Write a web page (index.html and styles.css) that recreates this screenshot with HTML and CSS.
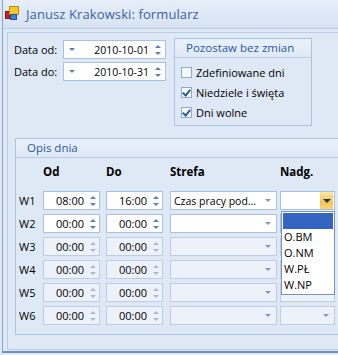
FILE: index.html
```html
<!DOCTYPE html>
<html lang="pl">
<head>
  <meta charset="UTF-8">
  <title>Janusz Krakowski: formularz</title>
  <link rel="stylesheet" href="styles.css">
</head>
<body>
  <div class="window">
    <div class="titlebar">
      <svg class="app-icon" width="15" height="15" viewBox="0 0 15 15">
        <rect x="0.5" y="5.5" width="4" height="7" fill="#c8231e" stroke="#8a1410"/>
        <rect x="4.5" y="0.5" width="9" height="8" fill="#f7c928" stroke="#b98a10"/>
        <rect x="5.5" y="8.5" width="6" height="5" fill="#3f7fd6" stroke="#23509a"/>
      </svg>
      <span class="title">Janusz Krakowski: formularz</span>
    </div>

    <div class="panel">
      <div class="top">
        <div class="dates">
          <div class="date-row">
            <span class="lbl">Data od:</span>
            <div class="edit date">
              <span class="tri down small"></span>
              <span class="val">2010-10-01</span>
              <span class="spin"><i class="tri up"></i><i class="tri down"></i></span>
            </div>
          </div>
          <div class="date-row">
            <span class="lbl">Data do:</span>
            <div class="edit date">
              <span class="tri down small"></span>
              <span class="val">2010-10-31</span>
              <span class="spin"><i class="tri up"></i><i class="tri down"></i></span>
            </div>
          </div>
        </div>

        <div class="group keep">
          <div class="group-head">Pozostaw bez zmian</div>
          <div class="checks">
            <div class="check"><span class="box"></span>Zdefiniowane dni</div>
            <div class="check"><span class="box on"></span>Niedziele i święta</div>
            <div class="check"><span class="box on"></span>Dni wolne</div>
          </div>
        </div>
      </div>

      <div class="group day">
        <div class="group-head">Opis dnia</div>
        <div class="grid">
          <span></span><b>Od</b><b>Do</b><b>Strefa</b><b>Nadg.</b>

          <span class="wk">W1</span>
          <div class="edit time"><span class="val">08:00</span><span class="spin"><i class="tri up"></i><i class="tri down"></i></span></div>
          <div class="edit time"><span class="val">16:00</span><span class="spin"><i class="tri up"></i><i class="tri down"></i></span></div>
          <div class="edit combo"><span class="val">Czas pracy pod…</span><span class="tri down"></span></div>
          <div class="edit combo nadg"><span class="val"></span><span class="btn"><span class="tri down dark"></span></span></div>

          <span class="wk">W2</span>
          <div class="edit time"><span class="val">00:00</span><span class="spin"><i class="tri up"></i><i class="tri down"></i></span></div>
          <div class="edit time"><span class="val">00:00</span><span class="spin"><i class="tri up"></i><i class="tri down"></i></span></div>
          <div class="edit combo"><span class="val"></span><span class="tri down"></span></div>
          <div class="edit combo nadg"><span class="val"></span><span class="tri down"></span></div>

          <span class="wk">W3</span>
          <div class="edit time off"><span class="val">00:00</span><span class="spin"><i class="tri up"></i><i class="tri down"></i></span></div>
          <div class="edit time off"><span class="val">00:00</span><span class="spin"><i class="tri up"></i><i class="tri down"></i></span></div>
          <div class="edit combo off"><span class="val"></span><span class="tri down"></span></div>
          <div class="edit combo nadg off"><span class="val"></span><span class="tri down"></span></div>

          <span class="wk">W4</span>
          <div class="edit time off"><span class="val">00:00</span><span class="spin"><i class="tri up"></i><i class="tri down"></i></span></div>
          <div class="edit time off"><span class="val">00:00</span><span class="spin"><i class="tri up"></i><i class="tri down"></i></span></div>
          <div class="edit combo off"><span class="val"></span><span class="tri down"></span></div>
          <div class="edit combo nadg off"><span class="val"></span><span class="tri down"></span></div>

          <span class="wk">W5</span>
          <div class="edit time off"><span class="val">00:00</span><span class="spin"><i class="tri up"></i><i class="tri down"></i></span></div>
          <div class="edit time off"><span class="val">00:00</span><span class="spin"><i class="tri up"></i><i class="tri down"></i></span></div>
          <div class="edit combo off"><span class="val"></span><span class="tri down"></span></div>
          <div class="edit combo nadg off"><span class="val"></span><span class="tri down"></span></div>

          <span class="wk">W6</span>
          <div class="edit time off"><span class="val">00:00</span><span class="spin"><i class="tri up"></i><i class="tri down"></i></span></div>
          <div class="edit time off"><span class="val">00:00</span><span class="spin"><i class="tri up"></i><i class="tri down"></i></span></div>
          <div class="edit combo off"><span class="val"></span><span class="tri down"></span></div>
          <div class="edit combo nadg off"><span class="val"></span><span class="tri down"></span></div>
        </div>

        <ul class="droplist">
          <li class="sel">&nbsp;</li>
          <li>O.BM</li>
          <li>O.NM</li>
          <li>W.PŁ</li>
          <li>W.NP</li>
        </ul>
      </div>
    </div>
  </div>
</body>
</html>
```

FILE: styles.css
```css
* { box-sizing: border-box; }
html, body { margin: 0; width: 338px; height: 355px; overflow: hidden; }
body { font-family: "Open Sans", "Noto Sans", sans-serif; font-size: 11px; color: #000; background: #dfe9f5; }

.window { height: 353px; margin-left: 2px; border-left: 1px solid #8aa7d0; border-bottom: 2px solid #6f8fc0; background: #dfe9f5; }

.titlebar { height: 29px; display: flex; align-items: center; padding-left: 2px; gap: 6px; background: linear-gradient(#e6eef9, #d6e3f4); border-bottom: 1px solid #b9cde8; }
.app-icon { display: block; margin-top: -1px; }
.title { font-size: 13px; color: #3d62a0; letter-spacing: 0.1px; }

.panel { margin: 3px 0 0 4px; height: 318px; border: 1px solid #b9cde8; border-right: none; padding: 6px 0 0 6px; position: relative; }

.top { display: flex; align-items: flex-start; }
.dates { display: flex; flex-direction: column; gap: 3px; padding-top: 1px; }
.date-row { display: flex; align-items: center; }
.lbl { width: 49px; }

.edit { display: flex; align-items: center; height: 19px; background: #fff; border: 1px solid #a9c1e0; }
.edit.off { background: #edf2fa; border-color: #bccde4; }
.edit .val { flex: 1; white-space: nowrap; overflow: hidden; }
.date { width: 103px; padding: 0 4px 0 5px; }
.date .val { text-align: right; padding-right: 6px; font-size: 10.5px; }
.time { width: 57px; padding-right: 3px; }
.time .val { text-align: right; padding-right: 6px; }
.combo { width: 107px; padding: 0 5px 0 3px; }
.combo .val { font-size: 10.5px; }
.combo.nadg { width: 55px; }

.tri { display: block; width: 0; height: 0; border-left: 3px solid transparent; border-right: 3px solid transparent; }
.tri.down { border-top: 3px solid #5d7fb4; }
.tri.up { border-bottom: 3px solid #5d7fb4; }
.tri.small { margin-right: 2px; }
.off .tri.down { border-top-color: #a9b9cf; }
.off .tri.up { border-bottom-color: #a9b9cf; }
.spin { display: flex; flex-direction: column; gap: 4px; }
.combo > .tri.down { border-top-color: #7f98bf; }
.tri.dark { border-top-color: #1d3560; border-left-width: 4px; border-right-width: 4px; border-top-width: 4px; }
.btn { width: 13px; height: 17px; margin-right: -4px; display: flex; align-items: center; justify-content: center; background: linear-gradient(#fde7a4, #f8c24e 60%, #fbd474); }

.group { border: 1px solid #a9c3e4; }
.group-head { height: 19px; padding-left: 11px; line-height: 18px; color: #2b58a0; font-size: 11.5px; background: linear-gradient(#e8f0fa, #dfe9f6); border-bottom: 1px solid #b6cbe7; }
.keep { width: 138px; height: 88px; margin: -1px 0 0 8px; }
.checks { padding: 8px 0 0 6px; display: flex; flex-direction: column; gap: 8px; }
.check { display: flex; align-items: center; gap: 4px; height: 12px; }
.box { width: 11px; height: 11px; border: 1px solid #8ea9d2; background: #f6f9fd; position: relative; }
.box.on::after { content: ""; position: absolute; left: 2px; top: 0px; width: 3px; height: 6px; border: solid #2b5aa8; border-width: 0 2px 2px 0; transform: rotate(40deg); }

.day { margin: 12px 0 0 1px; height: 197px; border-right: none; position: relative; }
.grid { display: grid; grid-template-columns: 24px 63px 64px 110px 55px; row-gap: 4px; padding: 4px 0 0 3px; align-items: center; }
.grid > span, .grid > b { height: 19px; line-height: 19px; }
.grid > b { margin-bottom: 6px; font-weight: bold; font-size: 11.5px; }

.droplist { position: absolute; left: 265px; top: 72px; width: 54px; height: 84px; margin: 0; padding: 1px; list-style: none; background: #fff; border: 1px solid #7b94bd; }
.droplist li { height: 16px; line-height: 16px; padding-left: 1px; }
.droplist li.sel { background: #3366c2; }
```
